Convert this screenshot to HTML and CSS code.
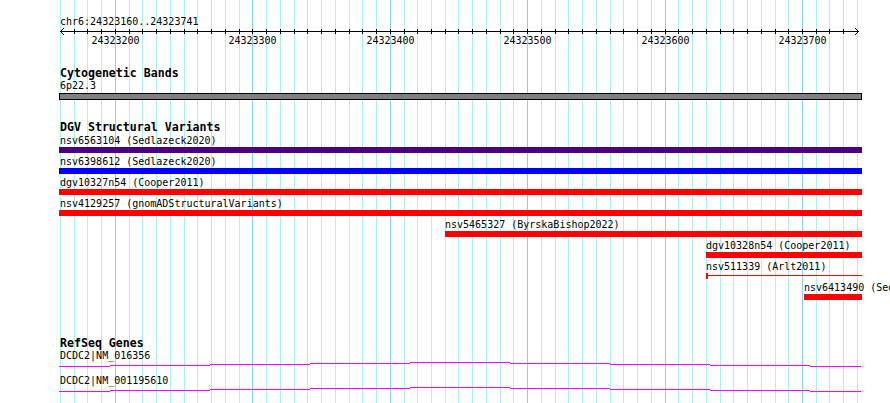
FILE: index.html
```html
<!DOCTYPE html>
<html>
  <head>
    <meta charset="utf-8">
    <title>chr6:24323160..24323741</title>
    <link rel="stylesheet" href="styles.css">
  </head>
  <body>
    <div id="browser">
      <svg id="grid" width="890" height="403"></svg>

      <div id="tracks">
        <div class="ruler">
          <div class="ruler-label">chr6:24323160..24323741</div>
          <svg id="scale" width="810" height="20"></svg>
        </div>

        <section class="track track-cyto">
          <h2 class="track-title">Cytogenetic Bands</h2>
          <div class="feature" style="width:802px">
            <div class="feature-label">6p22.3</div>
            <div class="band"></div>
          </div>
        </section>

        <section class="track track-dgv">
          <h2 class="track-title">DGV Structural Variants</h2>
          <div class="features">
            <div class="feature" style="width:802px">
              <div class="feature-label">nsv6563104 (Sedlazeck2020)</div>
              <div class="bar from-left purple"></div>
            </div>
            <div class="feature" style="width:802px">
              <div class="feature-label">nsv6398612 (Sedlazeck2020)</div>
              <div class="bar from-left blue"></div>
            </div>
            <div class="feature" style="width:802px">
              <div class="feature-label">dgv10327n54 (Cooper2011)</div>
              <div class="bar from-left"></div>
            </div>
            <div class="feature" style="width:802px">
              <div class="feature-label">nsv4129257 (gnomADStructuralVariants)</div>
              <div class="bar from-left"></div>
            </div>
            <div class="feature" style="margin-left:385px;width:417px">
              <div class="feature-label">nsv5465327 (ByrskaBishop2022)</div>
              <div class="bar"></div>
            </div>
            <div class="feature" style="margin-left:646px;width:156px">
              <div class="feature-label">dgv10328n54 (Cooper2011)</div>
              <div class="bar"></div>
            </div>
            <div class="feature" style="margin-left:646px;width:156px">
              <div class="feature-label">nsv511339 (Arlt2011)</div>
              <div class="bar thin"></div>
            </div>
            <div class="feature" style="margin-left:744px;width:58px">
              <div class="feature-label">nsv6413490 (Sedlazeck2020)</div>
              <div class="bar"></div>
            </div>
          </div>
        </section>

        <section class="track track-refseq">
          <h2 class="track-title">RefSeq Genes</h2>
          <div class="genes">
            <div class="gene">
              <div class="feature-label">DCDC2|NM_016356</div>
              <svg class="gene-model" width="803" height="7">
                <path d="M0 5.5H51M51 4.5H151M151 3.5H251M251 2.5H351M351 1.5H451M451 2.5H551M551 3.5H651M651 4.5H751M751 5.5H802" />
              </svg>
            </div>
            <div class="gene">
              <div class="feature-label">DCDC2|NM_001195610</div>
              <svg class="gene-model" width="803" height="7">
                <path d="M0 5.5H51M51 4.5H151M151 3.5H251M251 2.5H351M351 1.5H451M451 2.5H551M551 3.5H651M651 4.5H751M751 5.5H802" />
              </svg>
            </div>
          </div>
        </section>
      </div>
    </div>

    <script>
      const VIEW_START = 24323160
      const VIEW_END = 24323741
      const PX_PER_BP = 1.37407
      const ORIGIN = 60

      function xAt(pos) {
        return Math.round(ORIGIN + (pos - VIEW_START) * PX_PER_BP)
      }

      function drawGrid() {
        let lines = ""
        for (let pos = VIEW_START; pos <= VIEW_END; pos += 10) {
          const x = xAt(pos) + 0.5
          const cls = pos % 100 === 0 ? "grid-line major" : "grid-line"
          lines += `<line class="${cls}" x1="${x}" y1="0" x2="${x}" y2="403" />`
        }
        document.getElementById("grid").innerHTML = lines
      }

      function drawScale() {
        const right = xAt(VIEW_END) - ORIGIN + 1
        let out = `<line x1="0" y1="4.5" x2="${right}" y2="4.5" />`
        out += `<path d="M4 1L0.5 4.5L4 8" />`
        out += `<path d="M${right - 4} 1L${right - 0.5} 4.5L${right - 4} 8" />`

        for (let pos = VIEW_START + 10; pos < VIEW_END - 5; pos += 10) {
          const x = xAt(pos) - ORIGIN + 0.5
          out += `<line x1="${x}" y1="2" x2="${x}" y2="7" />`
          if (pos % 100 === 0) {
            out += `<text x="${x}" y="17">${pos}</text>`
          }
        }
        document.getElementById("scale").innerHTML = out
      }

      drawGrid()
      drawScale()
    </script>
  </body>
</html>
```

FILE: styles.css
```css
* {
  box-sizing: border-box;
  margin: 0;
  padding: 0;
}
body {
  width: 890px;
  height: 403px;
  overflow: hidden;
  background: white;
  color: black;
  font-family: "DejaVu Sans Mono", monospace;
  font-size: 10px;
  line-height: 11px;
}
#browser {
  position: relative;
  height: 403px;
}
#grid {
  position: absolute;
  top: 0;
  left: 0;
}
.grid-line {
  stroke: #afeeee;
  stroke-width: 1;
  shape-rendering: crispEdges;
}
.grid-line.major {
  stroke: #87cefa;
}
#tracks {
  position: relative;
  padding: 16px 0 0 60px;
}
.ruler-label {
  height: 11px;
  white-space: nowrap;
}
#scale {
  display: block;
  overflow: visible;
}
#scale line,
#scale path {
  stroke: black;
  stroke-width: 1;
  fill: none;
  shape-rendering: crispEdges;
}
#scale text {
  font-family: "DejaVu Sans Mono", monospace;
  font-size: 10px;
  text-anchor: middle;
  fill: black;
}
.track-title {
  font-size: 11.6px;
  line-height: 12px;
  font-weight: bold;
  white-space: nowrap;
}
.track-cyto {
  margin-top: 20px;
}
.track-dgv {
  margin-top: 21px;
}
.track-refseq {
  margin-top: 37px;
}
.feature-label {
  height: 11px;
  white-space: nowrap;
}
.track-cyto .feature {
  margin-top: 1px;
}
.band {
  margin: 2px 0 0 -1px;
  height: 7px;
  background: #808080;
  border: 1px solid black;
}
.features {
  display: flex;
  flex-direction: column;
  align-items: flex-start;
  gap: 3px;
  margin-top: 2px;
}
.bar {
  margin-top: 1px;
  height: 6px;
  background: #ff0000;
}
.bar.from-left {
  margin-left: -1px;
}
.bar.purple {
  background: #4b0082;
}
.bar.blue {
  background: #0000ff;
}
.bar.thin {
  background: linear-gradient(#ff0000, #ff0000) 0 2px / 100% 1px no-repeat;
  border-left: 2px solid #ff0000;
}
.genes {
  display: flex;
  flex-direction: column;
  gap: 7px;
  margin-top: 1px;
}
.gene-model {
  display: block;
  margin-left: -1px;
}
.gene-model path {
  stroke: #ff00ff;
  stroke-width: 1;
  fill: none;
  shape-rendering: crispEdges;
}
```
